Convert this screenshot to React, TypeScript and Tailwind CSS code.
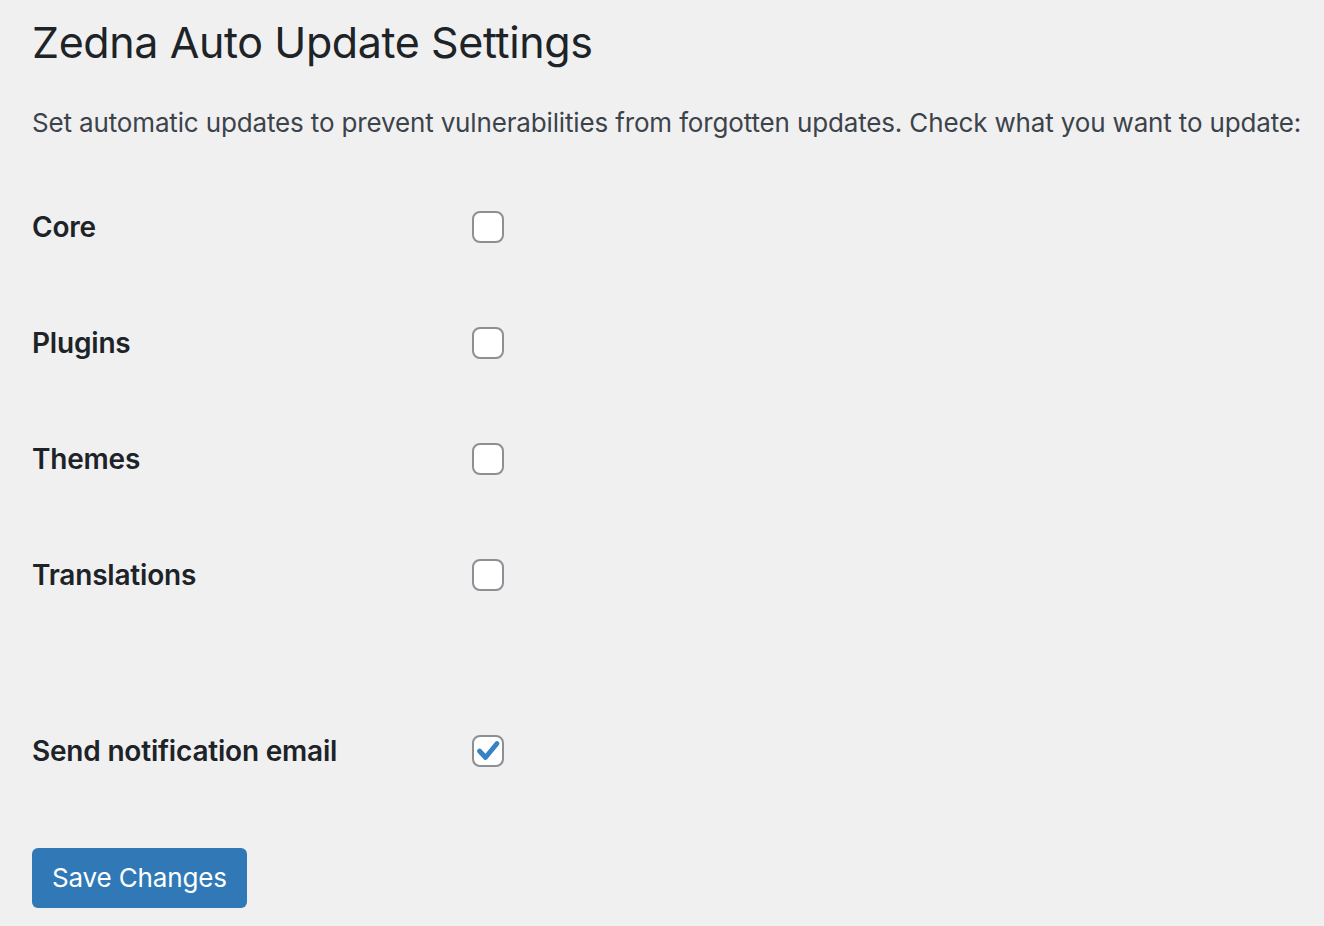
import React from "react";

const Box = ({ checked }: { checked?: boolean }) => (
  <div className="w-[32px] h-[32px] rounded-[8px] border-2 border-[#8c8f94] bg-white flex items-center justify-center shrink-0">
    {checked && (
      <svg width="26" height="26" viewBox="0 0 26 26">
        <path d="M4.5 13 L10.5 19.5 L22 5.5" fill="none" stroke="#3582c4" strokeWidth="4.8" strokeLinecap="round" strokeLinejoin="round" />
      </svg>
    )}
  </div>
);

const Row = ({ label, checked }: { label: string; checked?: boolean }) => (
  <div className="flex items-center h-[116px]">
    <div className="w-[440px] text-[28px] font-semibold text-[#1d2327] tracking-[-0.2px]">{label}</div>
    <Box checked={checked} />
  </div>
);

export default function App() {
  return (
    <div
      className="w-[1324px] h-[926px] bg-[#f0f0f1] pl-[32px] overflow-hidden"
      style={{ fontFamily: "Inter, 'Noto Sans', sans-serif" }}
    >
      <h1 className="text-[43px] font-normal text-[#1d2327] leading-[60px] pt-[12px] tracking-[-0.4px]">
        Zedna Auto Update Settings
      </h1>
      <p className="text-[26px] text-[#3c434a] mt-[33px] leading-[36px] tracking-[-0.15px]">
        Set automatic updates to prevent vulnerabilities from forgotten updates. Check what you want to update:
      </p>
      <div className="mt-[28px]">
        <Row label="Core" />
        <Row label="Plugins" />
        <Row label="Themes" />
        <Row label="Translations" />
      </div>
      <div className="mt-[60px]">
        <Row label="Send notification email" checked />
      </div>
      <button className="mt-[39px] h-[60px] px-[20px] rounded-[6px] bg-[#3079b6] text-white text-[26px] leading-[58px] tracking-[-0.15px]">
        Save Changes
      </button>
    </div>
  );
}
